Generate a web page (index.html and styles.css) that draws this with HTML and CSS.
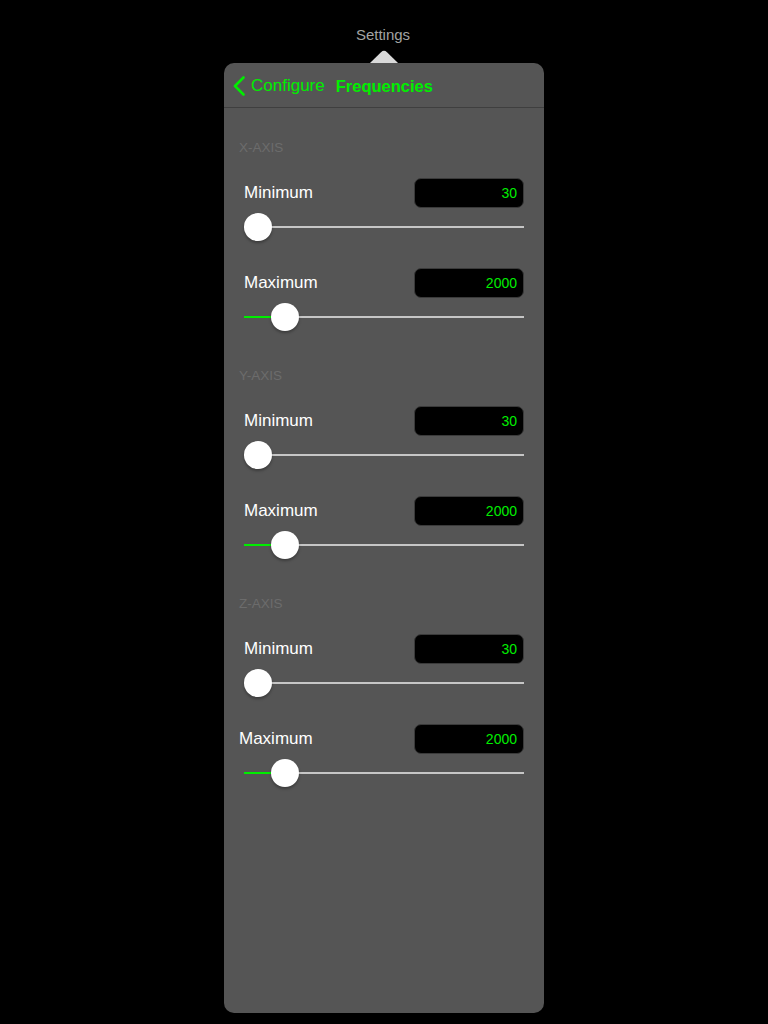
FILE: index.html
```html
<!DOCTYPE html>
<html lang="en">
<head>
<meta charset="utf-8">
<title>Settings</title>
<link rel="stylesheet" href="styles.css">
</head>
<body>
<div class="popover">
  <div class="popover-title">Settings</div>
  <div class="popover-arrow">
    <svg width="28" height="13" viewBox="0 0 28 13"><path d="M0 13 L11 2.2 Q14 -0.6 17 2.2 L28 13 Z" fill="#d9d9d9"/></svg>
  </div>
  <div class="panel">
    <div class="nav">
      <svg class="chev" width="12" height="20" viewBox="0 0 12 20"><path d="M10.5 1.5 L2 10 L10.5 18.5" fill="none" stroke="#00ee00" stroke-width="2.6" stroke-linecap="round" stroke-linejoin="round"/></svg>
      <span class="back">Configure</span>
      <span class="nav-title">Frequencies</span>
    </div>
    <div class="content">
      <section class="section">
        <div class="section-title">X-AXIS</div>
        <div class="field">
          <div class="field-row"><span class="label">Minimum</span><span class="value">30</span></div>
          <div class="slider"><div class="track"></div><div class="fill" style="width:0px"></div><div class="thumb" style="left:0px"></div></div>
        </div>
        <div class="field">
          <div class="field-row"><span class="label">Maximum</span><span class="value">2000</span></div>
          <div class="slider"><div class="track"></div><div class="fill" style="width:36px"></div><div class="thumb" style="left:27px"></div></div>
        </div>
      </section>
      <section class="section">
        <div class="section-title">Y-AXIS</div>
        <div class="field">
          <div class="field-row"><span class="label">Minimum</span><span class="value">30</span></div>
          <div class="slider"><div class="track"></div><div class="fill" style="width:0px"></div><div class="thumb" style="left:0px"></div></div>
        </div>
        <div class="field">
          <div class="field-row"><span class="label">Maximum</span><span class="value">2000</span></div>
          <div class="slider"><div class="track"></div><div class="fill" style="width:36px"></div><div class="thumb" style="left:27px"></div></div>
        </div>
      </section>
      <section class="section">
        <div class="section-title">Z-AXIS</div>
        <div class="field">
          <div class="field-row"><span class="label">Minimum</span><span class="value">30</span></div>
          <div class="slider"><div class="track"></div><div class="fill" style="width:0px"></div><div class="thumb" style="left:0px"></div></div>
        </div>
        <div class="field">
          <div class="field-row"><span class="label label-shift">Maximum</span><span class="value">2000</span></div>
          <div class="slider"><div class="track"></div><div class="fill" style="width:36px"></div><div class="thumb" style="left:27px"></div></div>
        </div>
      </section>
    </div>
  </div>
</div>
</body>
</html>
```

FILE: styles.css
```css
html, body {
  margin: 0;
  padding: 0;
  background: #000;
  font-family: "Liberation Sans", Arial, sans-serif;
}

.popover {
  width: 320px;
  margin: 0 auto;
  padding-top: 25px;
  display: flex;
  flex-direction: column;
}

.popover-title {
  height: 20px;
  line-height: 20px;
  font-size: 15px;
  color: #a3a3a3;
  text-align: center;
  padding-right: 2px;
}

.popover-arrow {
  margin-top: 5px;
  height: 13px;
  display: flex;
  justify-content: center;
}

.popover-arrow svg {
  display: block;
  margin-left: -1px;
}

.panel {
  height: 950px;
  background: #555555;
  border-radius: 10px;
  overflow: hidden;
}

.nav {
  box-sizing: border-box;
  height: 45px;
  border-bottom: 1px solid #3f3f3f;
  display: flex;
  align-items: center;
  padding-left: 9px;
  padding-top: 2px;
  color: #00ee00;
  font-size: 17px;
}

.chev {
  display: block;
  margin-right: 6px;
  margin-top: -1px;
}

.back {
  margin-right: 11px;
}

.nav-title {
  font-weight: bold;
  font-size: 16.5px;
}

.content {
  padding: 32px 20px 0 20px;
}

.section {
  display: flex;
  flex-direction: column;
  margin-bottom: 37px;
}

.section-title {
  height: 16px;
  line-height: 16px;
  font-size: 13.5px;
  color: #6c6c6c;
  margin-left: -5px;
  margin-bottom: 22px;
}

.field + .field {
  margin-top: 27px;
}

.field-row {
  height: 30px;
  display: flex;
  align-items: center;
  justify-content: space-between;
}

.label {
  font-size: 17px;
  color: #fff;
}

.label-shift {
  margin-left: -5px;
}

.value {
  box-sizing: border-box;
  width: 110px;
  height: 30px;
  line-height: 28px;
  background: #000;
  border: 1px solid #3a3a3a;
  border-radius: 7px;
  text-align: right;
  padding-right: 6px;
  font-size: 14px;
  color: #00ee00;
}

.slider {
  position: relative;
  height: 28px;
  margin-top: 5px;
}

.track {
  position: absolute;
  left: 0;
  right: 0;
  top: 13px;
  height: 2px;
  background: #c6c6c6;
}

.fill {
  position: absolute;
  left: 0;
  top: 13px;
  height: 2px;
  background: #00ee00;
}

.thumb {
  position: absolute;
  top: 0;
  width: 28px;
  height: 28px;
  border-radius: 50%;
  background: #fff;
  box-shadow: 0 2px 3px rgba(0, 0, 0, 0.3);
}
```
